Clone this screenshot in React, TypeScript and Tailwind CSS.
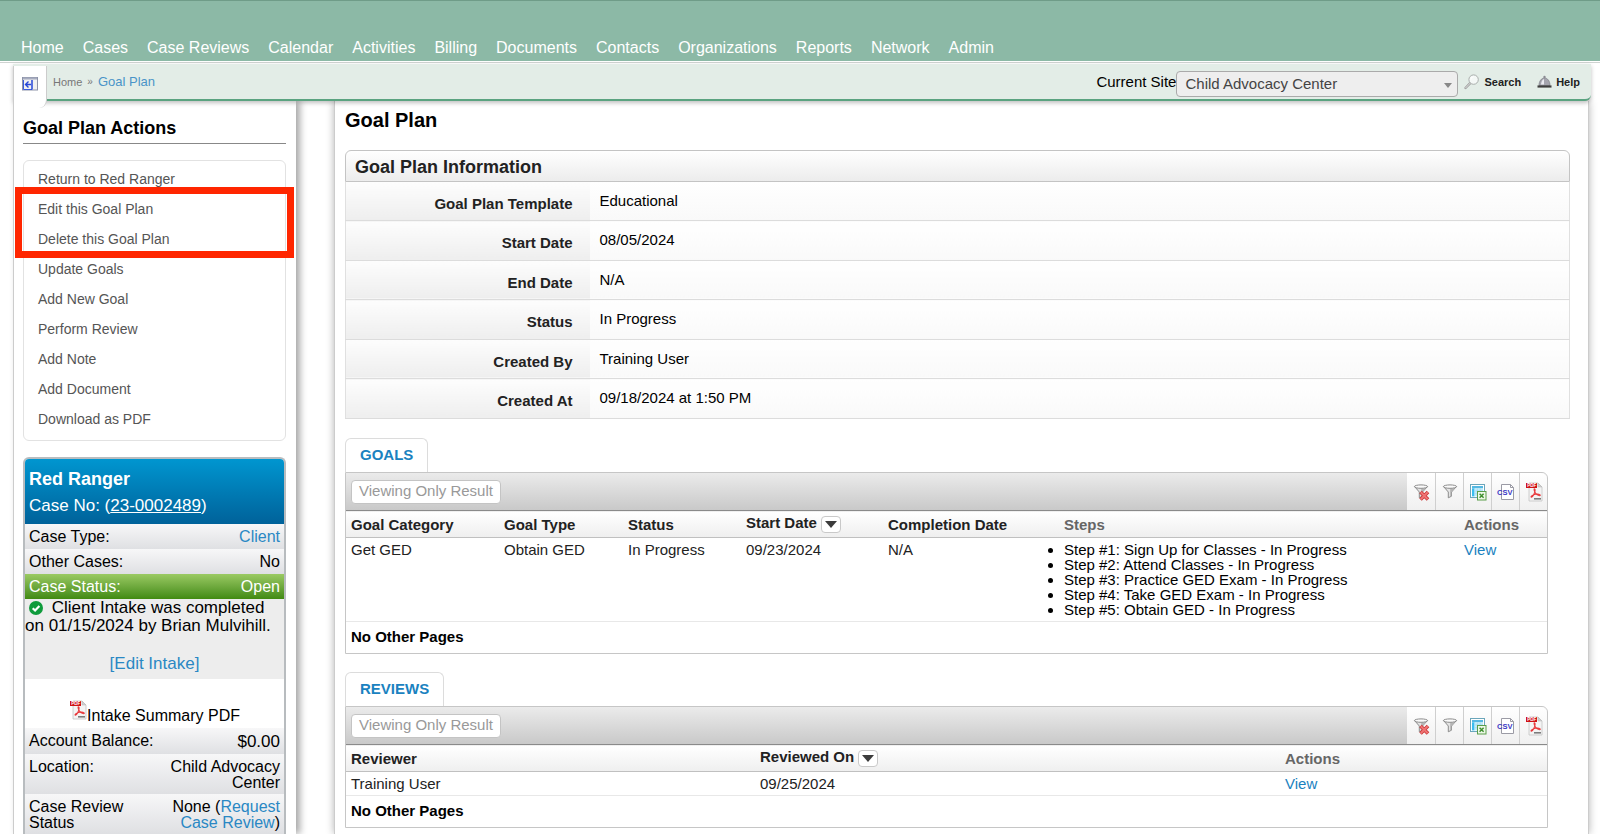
import type { ReactNode } from 'react'

const navItems = [
  'Home',
  'Cases',
  'Case Reviews',
  'Calendar',
  'Activities',
  'Billing',
  'Documents',
  'Contacts',
  'Organizations',
  'Reports',
  'Network',
  'Admin',
]

const planInfo = [
  { label: 'Goal Plan Template', value: 'Educational' },
  { label: 'Start Date', value: '08/05/2024' },
  { label: 'End Date', value: 'N/A' },
  { label: 'Status', value: 'In Progress' },
  { label: 'Created By', value: 'Training User' },
  { label: 'Created At', value: '09/18/2024 at 1:50 PM' },
]

const steps = [
  'Step #1: Sign Up for Classes - In Progress',
  'Step #2: Attend Classes - In Progress',
  'Step #3: Practice GED Exam - In Progress',
  'Step #4: Take GED Exam - In Progress',
  'Step #5: Obtain GED - In Progress',
]

function FunnelIcon({ clear = false }: { clear?: boolean }) {
  return (
    <svg width="18" height="18" viewBox="0 0 18 18" fill="none">
      <path d="M2.5 3.5 7.3 9v5.8l3.2-1.6V9l5-5.5z" fill="#e4e4e4" stroke="#8c8c8c" />
      <path d="M9.2 5.5v8l1.2-.8V9l3.2-3.5z" fill="#b5b5b5" />
      <ellipse cx="9" cy="3.6" rx="6.6" ry="1.7" fill="#fafafa" stroke="#8c8c8c" />
      {clear && (
        <>
          <path d="m8.5 9 7.5 7.5M16 9l-7.5 7.5" stroke="#c93434" strokeWidth="3.6" />
          <path d="m8.8 9.3 6.9 6.9M15.7 9.3l-6.9 6.9" stroke="#f07474" strokeWidth="2" />
        </>
      )}
    </svg>
  )
}

function ExcelIcon() {
  return (
    <svg width="18" height="18" viewBox="0 0 18 18" fill="none">
      <rect x="1.5" y="1.5" width="14" height="13" fill="#fff" stroke="#6ba6bb" />
      <rect x="3" y="3" width="11" height="2.4" fill="#55b8e2" />
      <rect x="3" y="5.4" width="2.6" height="8" fill="#39bdf0" />
      <rect x="5.6" y="5.4" width="8.4" height="8" fill="#c4ecfa" />
      <path d="M8.4 5.4v8M11.2 5.4v8M5.6 8h8.4M5.6 10.7h8.4" stroke="#9fd8ee" strokeWidth=".7" />
      <rect x="8.5" y="8.5" width="8.5" height="8.5" fill="#eef8e8" stroke="#5a9e4a" />
      <path d="m10.6 10.8 4 4M14.6 10.8l-4 4" stroke="#3f8f2f" strokeWidth="1.5" />
    </svg>
  )
}

function CsvIcon() {
  return (
    <svg width="18" height="18" viewBox="0 0 18 18" fill="none">
      <path d="M4.5 1.5h9l3 3v12h-12z" fill="#fff" stroke="#9b9ba5" />
      <path d="M13.5 1.5v3h3" stroke="#9b9ba5" />
      <text x="0" y="12" fontSize="7.5" fontWeight="700" fill="#3a36c4" className="font-['Liberation_Sans',sans-serif]">
        CSV
      </text>
    </svg>
  )
}

function PdfIcon() {
  return (
    <svg width="18" height="20" viewBox="0 0 18 20" fill="none" className="shrink-0">
      <path d="M4 1h9l4 4v14H4z" fill="#f4f4f4" stroke="#c4c4c4" strokeWidth=".8" />
      <path d="M13 1v4h4z" fill="#d0d0d0" stroke="#b4b4b4" strokeWidth=".5" />
      <path d="M1 1h11v5H1z" fill="#cf1216" />
      <text x="2.2" y="5.2" fontSize="4.6" fontWeight="700" fill="#fff" className="font-['Liberation_Sans',sans-serif]">
        PDF
      </text>
      <path
        d="M9.3 6.8c1.2 0 .8 2.4.3 3.9-.6 1.7-1.9 4.3-3.2 4.5-1.3-.5 1.6-2.6 4.1-3 2.5-.4 5 .2 4.8 1.1-.4.9-3.3-.2-4.7-2C9.4 9.7 8.7 6.9 9.3 6.8z"
        stroke="#e8383b"
        strokeWidth="1.1"
      />
      <path d="M9 16.8h7" stroke="#7c7c7c" strokeWidth="1.6" />
    </svg>
  )
}

function MenuToggleIcon() {
  return (
    <svg width="16" height="14" viewBox="0 0 16 14" fill="none">
      <rect x=".5" y=".5" width="15" height="12.5" fill="#f0f0f0" stroke="#8d93a8" />
      <path d="M1 1.5h14" stroke="#a7acc0" strokeWidth="2" />
      <path d="M1.5 3v9.5h8.5" stroke="#3a5bdd" />
      <path d="M10 3v9.5" stroke="#2546d8" strokeWidth="1.5" />
      <path d="m6.5 4.5-3 3 3 3M3.5 7.5H9" stroke="#2546d8" strokeWidth="1.4" />
    </svg>
  )
}

function MagnifierIcon() {
  return (
    <svg width="16" height="16" viewBox="0 0 16 16" fill="none">
      <path d="M6.2 9.2 1.5 14" stroke="#9d9d9d" strokeWidth="2.4" strokeLinecap="round" />
      <path d="M6.2 9.2 1.5 14" stroke="#e3e3e3" strokeWidth="1" strokeLinecap="round" />
      <circle cx="9.6" cy="5.6" r="4.7" fill="#f4f8f6" stroke="#a9aeac" />
      <path d="M6.8 5.6a2.8 2.8 0 0 1 2.8-2.8" stroke="#fff" />
    </svg>
  )
}

function BellIcon() {
  return (
    <svg width="15" height="14" viewBox="0 0 15 14" fill="none">
      <path d="M2 10.5c0-4.5 2.5-7.5 5.5-7.5s5.5 3 5.5 7.5z" fill="#a3a3ad" stroke="#7b7b84" strokeWidth=".7" />
      <path d="M4 9.5c.2-2.6 1.2-4.6 3-5.5v5.5z" fill="#e9e9f0" />
      <circle cx="7.5" cy="2" r="1.2" fill="#8b8b93" />
      <path d="M.5 11.5h14" stroke="#3e3e3e" strokeWidth="2.2" />
    </svg>
  )
}

function CheckIcon() {
  return (
    <svg width="14" height="14" viewBox="0 0 14 14" fill="none" className="mx-1 inline-block align-[-2px]">
      <circle cx="7" cy="7" r="7" fill="#0f9b3c" />
      <path d="m3.7 7.2 2.4 2.3 4.3-4.4" stroke="#fff" strokeWidth="2.2" />
    </svg>
  )
}

function SortButton({ label }: { label: string }) {
  return (
    <button
      type="button"
      aria-label={label}
      className="ml-1 inline-flex h-[17px] w-5 items-center justify-center rounded-sm border border-[#c9c9c9] bg-white align-middle"
    >
      <svg width="12" height="7" viewBox="0 0 12 7">
        <path d="M0 0h12L6 7z" fill="#3c3c3c" />
      </svg>
    </button>
  )
}

const exportTools: { label: string; icon: ReactNode }[] = [
  { label: 'Clear filters', icon: <FunnelIcon clear /> },
  { label: 'Filter', icon: <FunnelIcon /> },
  { label: 'Export to Excel', icon: <ExcelIcon /> },
  { label: 'Export to CSV', icon: <CsvIcon /> },
  { label: 'Export to PDF', icon: <PdfIcon /> },
]

function ResultPanel({ title, children }: { title: string; children: ReactNode }) {
  return (
    <section className="mr-[22px]">
      <h2 className="inline-block h-[34px] rounded-t-md border border-b-0 border-[#dcdcdc] bg-white px-[14px] text-[15px] leading-8 font-bold text-[#1a82c0]">
        {title}
      </h2>
      <div className="rounded-tr-md border border-[#c6c6c6]">
        <div className="flex h-[37px] items-stretch justify-between rounded-tr-md bg-gradient-to-b from-[#ebebeb] to-[#c9c9c9]">
          <span className="ml-[5px] flex h-6 items-center self-center rounded-sm border border-[#c4c4c4] bg-white px-[7px] text-[15px] text-[#999]">
            Viewing Only Result
          </span>
          <div className="flex">
            {exportTools.map((tool) => (
              <button
                key={tool.label}
                type="button"
                aria-label={tool.label}
                className="flex w-7 items-center justify-center border-l border-[#cfcfcf] bg-gradient-to-b from-white to-[#f0f0f0] first:border-l-0 last:rounded-tr-md"
              >
                {tool.icon}
              </button>
            ))}
          </div>
        </div>
        {children}
        <p className="h-[31px] pl-[5px] text-[15px] leading-[30px] font-bold text-black">No Other Pages</p>
      </div>
    </section>
  )
}

const headRow =
  'h-[27px] border-t border-b border-t-[#8a8a8a] border-b-[#c0c0c0] bg-gradient-to-b from-white to-[#efefef] text-left text-[15px] leading-[15px] text-[#222]'
const bodyRow = 'border-b border-[#e8e8e8] align-top text-[15px] leading-[15px] text-[#222]'
const cell = 'pl-[5px] py-1'

function ActionLink({ children }: { children: ReactNode }) {
  return (
    <li>
      <a href="#" className="block h-[30px] text-[14px] leading-[30px] text-[#555]">
        {children}
      </a>
    </li>
  )
}

function CaseRow({ label, children }: { label: string; children: ReactNode }) {
  return (
    <div className="flex min-h-[25px] justify-between bg-gradient-to-b from-[#f7f7f8] to-[#dfe0e3] px-1 pt-[5px] pb-[3px]">
      <dt className="w-[130px] leading-4">{label}</dt>
      <dd className="flex-1 text-right leading-4">{children}</dd>
    </div>
  )
}

export default function App() {
  return (
    <div className="flex min-h-screen flex-col bg-white font-['Liberation_Sans',Arial,sans-serif] text-black">
      <header className="flex h-[61px] shrink-0 items-end border-t border-[#6f9c88] bg-[#8cb9a6] pb-[3px]">
        <nav className="flex gap-[19px] pl-[21px] text-[16px] leading-5 text-white">
          {navItems.map((item) => (
            <a key={item} href="#">
              {item}
            </a>
          ))}
        </nav>
      </header>
      <div className="mt-px h-px shrink-0 bg-[#cfd3d1]" />

      <div className="flex flex-1 flex-col pt-px pr-[9px] pl-[13px]">
        {/* Breadcrumb bar */}
        <div className="relative z-10 flex h-[37px] shrink-0 items-start rounded-br-md border-b-2 border-[#5aa380] bg-[#e3ede7] shadow-[0_2px_4px_rgba(0,0,0,0.25)]">
          <button
            type="button"
            aria-label="Toggle side menu"
            className="mt-[2px] flex h-[42px] w-[34px] shrink-0 justify-center rounded-br-lg border-r border-l border-r-[#ccc] border-l-[#ccc] bg-white pt-[11px]"
          >
            <MenuToggleIcon />
          </button>
          <div className="flex flex-1 items-center justify-between pt-[3px]">
            <p className="flex items-center pl-[6px] leading-6">
              <a href="#" className="text-[11px] text-[#777]">
                Home
              </a>
              <span className="px-[5px] text-[10px] text-[#777]">»</span>
              <a href="#" className="text-[13px] text-[#4a94c8]">
                Goal Plan
              </a>
            </p>
            <div className="flex items-center pr-[11px]">
              <label htmlFor="site" className="text-[15px]">
                Current Site
              </label>
              <span className="relative mt-1 block w-[282px]">
                <select
                  id="site"
                  className="block h-[26px] w-full appearance-none rounded-sm border border-[#aaa] bg-[#eee] pl-2 text-[15px] text-[#444]"
                >
                  <option>Child Advocacy Center</option>
                </select>
                <svg width="8" height="5" viewBox="0 0 8 5" className="pointer-events-none absolute top-3 right-[6px]">
                  <path d="M0 0h8L4 5z" fill="#888" />
                </svg>
              </span>
              <a href="#" className="ml-[6px] flex items-center gap-1 text-[11px] font-bold text-[#222]">
                <MagnifierIcon />
                Search
              </a>
              <a href="#" className="ml-4 flex items-center gap-1 text-[11px] font-bold text-[#222]">
                <BellIcon />
                Help
              </a>
            </div>
          </div>
        </div>

        <div className="flex flex-1 pr-[2px]">
          {/* Sidebar */}
          <aside className="w-[283px] shrink-0 border-l border-[#ccc] pt-[14px] pr-[10px] pl-[9px] shadow-[4px_0_7px_rgba(0,0,0,0.35)]">
            <h2 className="h-[29px] border-b border-[#888] text-[18px] leading-[26px] font-bold">Goal Plan Actions</h2>
            <div className="relative mt-4">
              <ul className="rounded-md border border-[#e2e2e2] pt-[3px] pb-[6px] pl-[14px]">
                <ActionLink>Return to Red Ranger</ActionLink>
                <ActionLink>Edit this Goal Plan</ActionLink>
                <ActionLink>Delete this Goal Plan</ActionLink>
                <ActionLink>Update Goals</ActionLink>
                <ActionLink>Add New Goal</ActionLink>
                <ActionLink>Perform Review</ActionLink>
                <ActionLink>Add Note</ActionLink>
                <ActionLink>Add Document</ActionLink>
                <ActionLink>Download as PDF</ActionLink>
              </ul>
              <div className="pointer-events-none absolute top-[27px] -right-2 -left-2 h-[71px] border-[7px] border-[#ff2600]" />
            </div>

            <div className="mt-4 rounded-t-md border-2 border-b-0 border-[#b8bcbf] text-[16px]">
              <div className="h-[65px] rounded-t-sm bg-gradient-to-b from-[#0096d0] to-[#00629a] px-1 pt-[7px] text-white">
                <h3 className="text-[18px] leading-[26px] font-bold">Red Ranger</h3>
                <p className="text-[17px] leading-7">
                  Case No: (
                  <a href="#" className="underline">
                    23-0002489
                  </a>
                  )
                </p>
              </div>
              <dl>
                <CaseRow label="Case Type:">
                  <a href="#" className="text-[#2a88c4]">
                    Client
                  </a>
                </CaseRow>
                <CaseRow label="Other Cases:">No</CaseRow>
                <div className="flex justify-between bg-gradient-to-b from-[#9aca62] to-[#418a10] px-1 py-1 leading-[17px] text-white">
                  <dt>Case Status:</dt>
                  <dd>Open</dd>
                </div>
              </dl>
              <div className="h-20 bg-[#ededed] text-[17px] leading-[18px]">
                <p>
                  <CheckIcon /> Client Intake was completed on 01/15/2024 by Brian Mulvihill.
                </p>
                <p className="pt-5 text-center">
                  <a href="#" className="text-[#2a88c4]">
                    [Edit Intake]
                  </a>
                </p>
              </div>
              <div className="flex h-[49px] items-end justify-center pb-1">
                <a href="#" className="flex items-end leading-4">
                  <span className="mb-1">
                    <PdfIcon />
                  </span>
                  Intake Summary PDF
                </a>
              </div>
              <dl>
                <CaseRow label="Account Balance:">
                  <span className="block text-[17px] leading-[18px]">$0.00</span>
                </CaseRow>
                <CaseRow label="Location:">Child Advocacy Center</CaseRow>
                <CaseRow label="Case Review Status">
                  None (
                  <a href="#" className="text-[#2a88c4]">
                    Request Case Review
                  </a>
                  )
                </CaseRow>
              </dl>
            </div>
          </aside>

          {/* Main panel */}
          <main className="ml-[38px] flex-1 border-r border-l border-[#ccc] pt-[7px] pr-[18px] pl-[10px] shadow-[0_0_8px_rgba(0,0,0,0.3)]">
            <h1 className="text-[20px] leading-6 font-bold">Goal Plan</h1>
            <div className="mt-[18px] h-8 rounded-t-md border border-[#c4c4c4] bg-gradient-to-b from-white to-[#ececec] pl-[9px] text-[18px] leading-8 font-bold text-[#222]">
              Goal Plan Information
            </div>
            <table className="h-[237px] w-full border-r border-l border-[#e0e0e0] text-[15px] leading-[18px]">
              <tbody>
                {planInfo.map((row) => (
                  <tr key={row.label} className="border-b border-[#dcdcdc] align-top">
                    <th
                      scope="row"
                      className="w-[244px] bg-gradient-to-b from-[#fdfdfd] to-[#eeeeee] pt-[13px] pr-[17px] pb-[7px] text-right text-[#222]"
                    >
                      {row.label}
                    </th>
                    <td className="bg-gradient-to-b from-white to-[#f9f9f9] pt-[10px] pb-[10px] pl-[10px]">{row.value}</td>
                  </tr>
                ))}
              </tbody>
            </table>

            <div className="mt-[19px] flex flex-col gap-[18px]">
              <ResultPanel title="GOALS">
                <table className="w-full table-fixed">
                  <colgroup>
                    <col className="w-[153px]" />
                    <col className="w-[124px]" />
                    <col className="w-[118px]" />
                    <col className="w-[142px]" />
                    <col className="w-[176px]" />
                    <col />
                    <col className="w-[88px]" />
                  </colgroup>
                  <thead>
                    <tr className={headRow}>
                      <th className="pl-[5px]">Goal Category</th>
                      <th className="pl-[5px]">Goal Type</th>
                      <th className="pl-[5px]">Status</th>
                      <th className="pl-[5px]">
                        Start Date
                        <SortButton label="Sort by start date" />
                      </th>
                      <th className="pl-[5px]">Completion Date</th>
                      <th className="pl-[5px] text-[#666]">Steps</th>
                      <th className="pl-[5px] text-[#666]">Actions</th>
                    </tr>
                  </thead>
                  <tbody>
                    <tr className={bodyRow}>
                      <td className={cell}>Get GED</td>
                      <td className={cell}>Obtain GED</td>
                      <td className={cell}>In Progress</td>
                      <td className={cell}>09/23/2024</td>
                      <td className={cell}>N/A</td>
                      <td className={cell}>
                        <ul className="list-disc text-black">
                          {steps.map((step) => (
                            <li key={step}>{step}</li>
                          ))}
                        </ul>
                      </td>
                      <td className={cell}>
                        <a href="#" className="text-[#1a82c0]">
                          View
                        </a>
                      </td>
                    </tr>
                  </tbody>
                </table>
              </ResultPanel>

              <ResultPanel title="REVIEWS">
                <table className="w-full table-fixed">
                  <colgroup>
                    <col className="w-[409px]" />
                    <col />
                    <col className="w-[267px]" />
                  </colgroup>
                  <thead>
                    <tr className={headRow}>
                      <th className="pl-[5px]">Reviewer</th>
                      <th className="pl-[5px]">
                        Reviewed On
                        <SortButton label="Sort by review date" />
                      </th>
                      <th className="pl-[5px] text-[#666]">Actions</th>
                    </tr>
                  </thead>
                  <tbody>
                    <tr className={bodyRow}>
                      <td className={cell}>Training User</td>
                      <td className={cell}>09/25/2024</td>
                      <td className={cell}>
                        <a href="#" className="text-[#1a82c0]">
                          View
                        </a>
                      </td>
                    </tr>
                  </tbody>
                </table>
              </ResultPanel>
            </div>
          </main>
        </div>
      </div>
    </div>
  )
}
